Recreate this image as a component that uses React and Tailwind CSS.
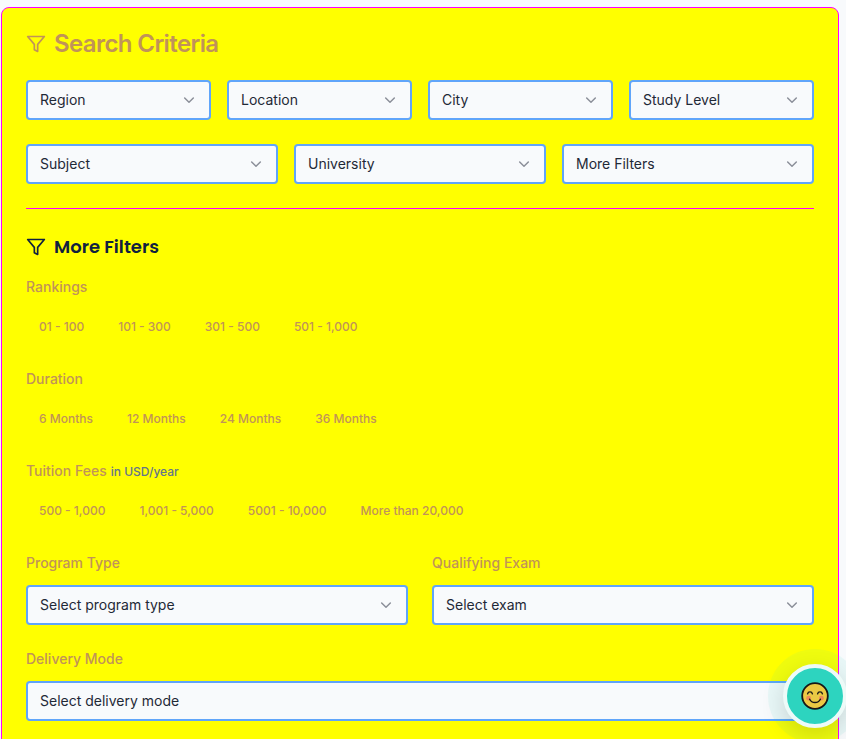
function Funnel({ className = "" }) {
  return (
    <svg viewBox="0 0 24 24" className={`h-5 w-5 shrink-0 ${className}`} fill="none" stroke="currentColor" strokeWidth="2" strokeLinecap="round" strokeLinejoin="round">
      <polygon points="22 3 2 3 10 12.46 10 19 14 21 14 12.46 22 3" />
    </svg>
  );
}

function Select({ text }) {
  return (
    <div className="flex h-10 w-full items-center justify-between rounded border-2 border-[#60a5fa] bg-[#f8fafc] px-3 text-sm text-[#1f2937]">
      <span>{text}</span>
      <svg viewBox="0 0 24 24" className="h-4 w-4 text-[#8b8f99]" fill="none" stroke="currentColor" strokeWidth="2.2" strokeLinecap="round" strokeLinejoin="round">
        <path d="m5.5 9 6.5 6.5L18.5 9" />
      </svg>
    </div>
  );
}

function Label({ children }) {
  return <div className="text-sm font-medium text-[#c19358]">{children}</div>;
}

function Options({ label, note, items }) {
  return (
    <div className="mb-6">
      <Label>
        {label}
        {note && <span className="ml-1 text-xs text-[#64748b]">{note}</span>}
      </Label>
      <div className="mt-3 flex gap-2">
        {items.map((t) => (
          <div key={t} className="flex h-9 items-center px-[13px] text-xs font-medium text-[#c19358]">{t}</div>
        ))}
      </div>
    </div>
  );
}

function Field({ label, text }) {
  return (
    <div className="flex flex-col gap-3">
      <Label>{label}</Label>
      <Select text={text} />
    </div>
  );
}

function Smiley() {
  return (
    <svg viewBox="0 0 28 28" className="h-7 w-7" fill="none">
      <circle cx="14" cy="14" r="12.8" fill="#ebc944" stroke="#171717" strokeWidth="1.8" />
      <circle cx="7.6" cy="16.2" r="2.4" fill="#ed8b58" />
      <circle cx="20.4" cy="16.2" r="2.4" fill="#ed8b58" />
      <path d="M6.6 11.8c.6-2.6 4.2-2.6 4.8 0M16.6 11.8c.6-2.6 4.2-2.6 4.8 0M8.6 17.2c2.2 4.4 8.6 4.4 10.8 0" stroke="#171717" strokeWidth="1.4" strokeLinecap="round" />
    </svg>
  );
}

export default function App() {
  return (
    <div className="relative h-[739px] w-full overflow-hidden bg-[#f8fafc] pt-[7px] pl-px font-['Inter',sans-serif]">
      <div className="h-[760px] w-[838px] rounded-lg border border-[#ff00ff] bg-[#ffff00] p-6">
        <div className="flex h-6 items-center gap-2 text-[#c19358]">
          <Funnel />
          <h1 className="text-2xl leading-6 font-semibold tracking-tight">Search Criteria</h1>
        </div>
        <div className="mt-6 grid grid-cols-4 gap-4">
          {["Region", "Location", "City", "Study Level"].map((t) => <Select key={t} text={t} />)}
        </div>
        <div className="mt-6 grid grid-cols-3 gap-4">
          {["Subject", "University", "More Filters"].map((t) => <Select key={t} text={t} />)}
        </div>
        <div className="mt-6 border-t border-[#ff00ff] pt-6">
          <div className="mb-4 flex h-7 items-center gap-2 text-[#10213f]">
            <Funnel />
            <h2 className="font-['Poppins','Inter',sans-serif] text-lg font-semibold">More Filters</h2>
          </div>
          <Options label="Rankings" items={["01 - 100", "101 - 300", "301 - 500", "501 - 1,000"]} />
          <Options label="Duration" items={["6 Months", "12 Months", "24 Months", "36 Months"]} />
          <Options label="Tuition Fees" note="in USD/year" items={["500 - 1,000", "1,001 - 5,000", "5001 - 10,000", "More than 20,000"]} />
          <div className="mb-6 grid grid-cols-2 gap-6">
            <Field label="Program Type" text="Select program type" />
            <Field label="Qualifying Exam" text="Select exam" />
          </div>
          <Field label="Delivery Mode" text="Select delivery mode" />
        </div>
      </div>
      <div className="absolute top-[649px] left-[768px] flex h-[94px] w-[94px] items-center justify-center rounded-full bg-[#2dd4bf]/8">
        <div className="flex h-16 w-16 items-center justify-center rounded-full border-4 border-[#edfaf8] bg-[#2dd4bf] shadow-[0_8px_24px_rgba(0,0,0,0.14)]">
          <Smiley />
        </div>
      </div>
    </div>
  );
}
